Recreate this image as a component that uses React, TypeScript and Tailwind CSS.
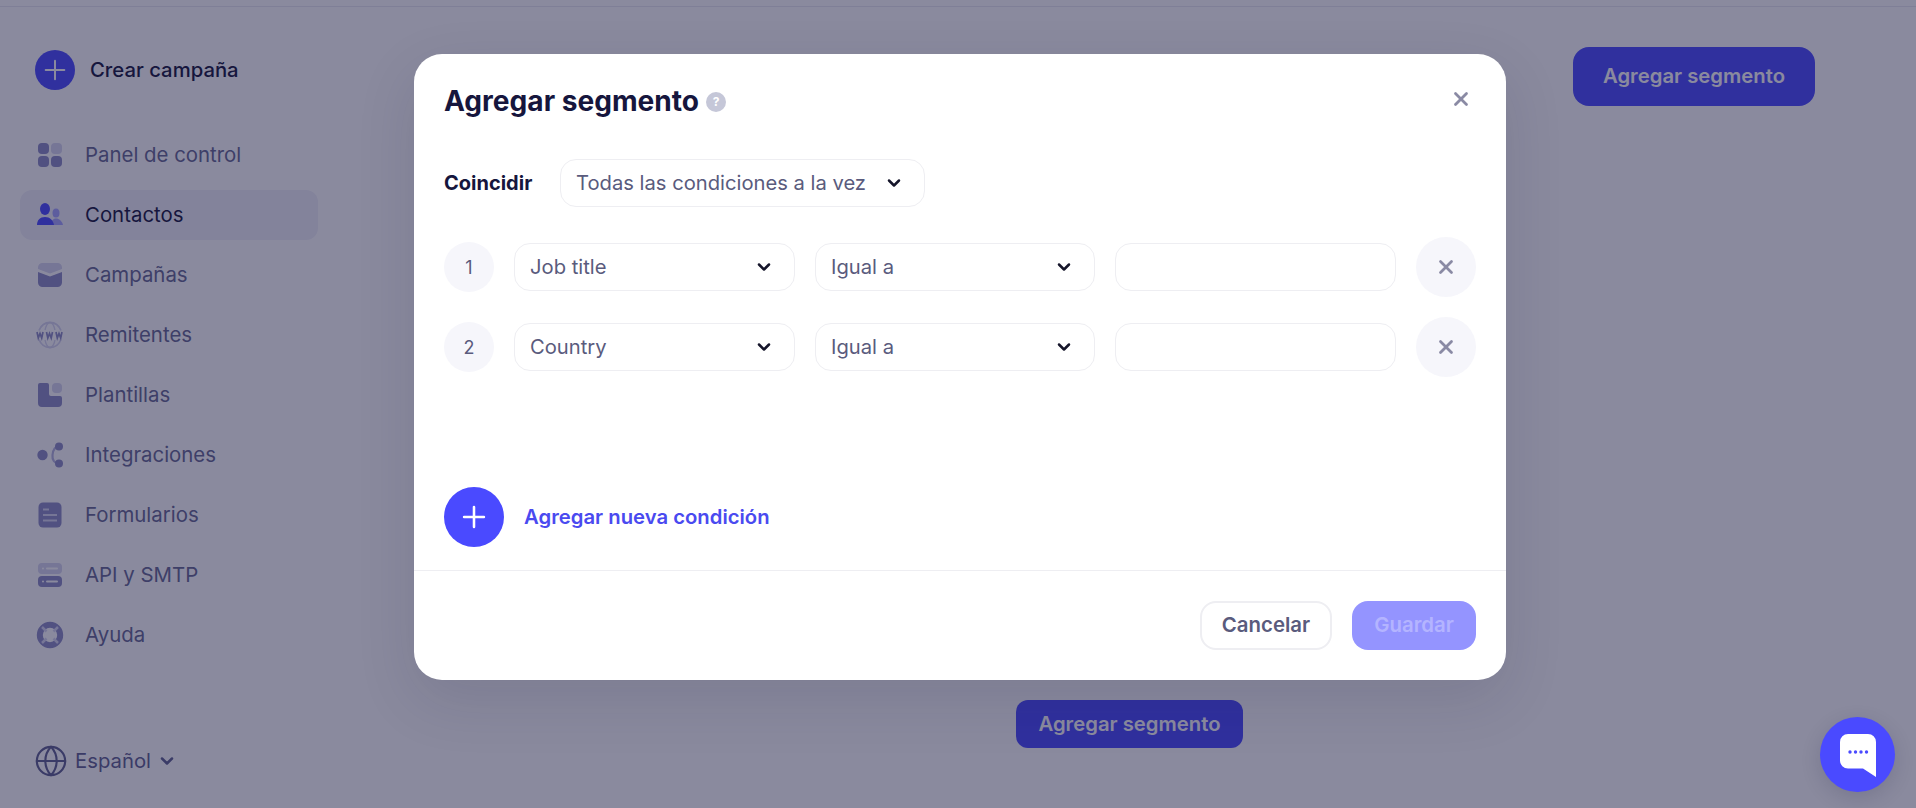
import { ChevronDown, Globe, Plus, X } from 'lucide-react';
import type { ReactNode } from 'react';

const DARK = '#8c8cc4';
const LIGHT = '#d6d6ee';

function PanelIcon() {
  return (
    <svg width="28" height="28" viewBox="0 0 28 28">
      <rect x="2" y="2" width="11" height="11" rx="4" fill={DARK} />
      <rect x="15" y="2" width="11" height="11" rx="4" fill={LIGHT} />
      <rect x="2" y="15" width="11" height="11" rx="4" fill={DARK} />
      <rect x="15" y="15" width="11" height="11" rx="4" fill={DARK} />
    </svg>
  );
}

function ContactsIcon() {
  return (
    <svg width="28" height="28" viewBox="0 0 28 28">
      <ellipse cx="20" cy="12" rx="3.500" ry="4.500" fill="#a4a4ff" />
      <path d="M15 24c0-4 2-6.500 5-6.500s6 2.500 7 6.500z" fill="#a4a4ff" />
      <ellipse cx="9" cy="8" rx="5" ry="6" fill="#4a4aff" />
      <path d="M1 24c0-5 3-8 8-8s8 3 9 8z" fill="#4a4aff" />
    </svg>
  );
}

function CampaignIcon() {
  return (
    <svg width="28" height="28" viewBox="0 0 28 28">
      <path d="M2 6.500A4.500 4.500 0 0 1 6.500 2h15A4.500 4.500 0 0 1 26 6.500v1.500l-12 4.500L2 8z" fill={LIGHT} />
      <path d="M2 11l12 4.500L26 11v10.500a4.500 4.500 0 0 1-4.500 4.500h-15A4.500 4.500 0 0 1 2 21.500z" fill={DARK} />
    </svg>
  );
}

function WwwIcon() {
  return (
    <svg width="28" height="28" viewBox="0 0 28 28" fill="none">
      <path d="M3 9.500C5 4.500 9 1.500 14 1.500s9 3 11 8M3 18.500c2 5 6 8 11 8s9-3 11-8" stroke={LIGHT} strokeWidth="1.800" />
      <path d="M9 9C10 4.500 12 1.500 14 1.500S18 4.500 19 9M9 19c1 4.500 3 7.500 5 7.500s4-3 5-7.500" stroke={LIGHT} strokeWidth="1.300" />
      <path d="M1 11l1.300 6 1.700-4.500L5.700 17 7 11M10.500 11l1.300 6 1.700-4.500 1.700 4.500 1.300-6M20 11l1.300 6 1.700-4.500 1.700 4.500 1.300-6" stroke={DARK} strokeWidth="1.700" />
    </svg>
  );
}

function TemplateIcon() {
  return (
    <svg width="28" height="28" viewBox="0 0 28 28">
      <path d="M2 4a2 2 0 0 1 2-2h7a2 2 0 0 1 2 2v9a2 2 0 0 0 2 2h9a2 2 0 0 1 2 2v5a4 4 0 0 1-4 4H6a4 4 0 0 1-4-4z" fill={DARK} />
      <rect x="16" y="2" width="10" height="10" rx="4" fill={LIGHT} />
    </svg>
  );
}

function IntegrationIcon() {
  return (
    <svg width="28" height="28" viewBox="0 0 28 28" fill="none">
      <path d="M23 5.500c-4.500 0-6 3.500-6.500 8.500s2 8.500 6.500 8.500" stroke="#b4b4de" strokeWidth="2.200" />
      <circle cx="6.500" cy="14" r="5.200" fill={DARK} />
      <circle cx="23" cy="5.500" r="4" fill={DARK} />
      <circle cx="23" cy="22.500" r="4" fill={DARK} />
    </svg>
  );
}

function FormIcon() {
  return (
    <svg width="28" height="28" viewBox="0 0 28 28">
      <rect x="2.500" y="1.500" width="23" height="25" rx="4.500" fill={DARK} />
      <rect x="7" y="7.500" width="6" height="2" fill={LIGHT} />
      <rect x="7" y="13" width="14" height="2" fill={LIGHT} />
      <rect x="7" y="18.500" width="14" height="2" fill={LIGHT} />
    </svg>
  );
}

function ApiIcon() {
  return (
    <svg width="28" height="28" viewBox="0 0 28 28">
      <rect x="2" y="2" width="24" height="11" rx="4" fill={LIGHT} />
      <rect x="2" y="15" width="24" height="11" rx="4" fill={DARK} />
      <circle cx="7" cy="7.500" r="1" fill="#fff" />
      <rect x="10" y="6.500" width="12" height="2" rx="1" fill="#fff" />
      <circle cx="7" cy="20.500" r="1" fill="#fff" />
      <rect x="10" y="19.500" width="12" height="2" rx="1" fill="#fff" />
    </svg>
  );
}

function HelpIcon() {
  return (
    <svg width="28" height="28" viewBox="0 0 28 28" fill="none">
      <circle cx="14" cy="14" r="10.200" stroke={DARK} strokeWidth="6" />
      <path d="M6 6l4.500 4.500M22 6l-4.500 4.500M6 22l4.500-4.500M22 22l-4.500-4.500" stroke={LIGHT} strokeWidth="2.500" />
    </svg>
  );
}

const navItems: { label: string; icon: ReactNode; active?: boolean }[] = [
  { label: 'Panel de control', icon: <PanelIcon /> },
  { label: 'Contactos', icon: <ContactsIcon />, active: true },
  { label: 'Campañas', icon: <CampaignIcon /> },
  { label: 'Remitentes', icon: <WwwIcon /> },
  { label: 'Plantillas', icon: <TemplateIcon /> },
  { label: 'Integraciones', icon: <IntegrationIcon /> },
  { label: 'Formularios', icon: <FormIcon /> },
  { label: 'API y SMTP', icon: <ApiIcon /> },
  { label: 'Ayuda', icon: <HelpIcon /> },
];

function Sidebar() {
  return (
    <aside className="w-[340px] shrink-0 flex flex-col pt-[43px] pb-[30px]">
      {/* Create campaign */}
      <div className="flex items-center gap-[15px] pl-[35px]">
        <div className="w-10 h-10 rounded-full bg-[#4a4aff] flex items-center justify-center text-white">
          <Plus size={32} strokeWidth={1.5} />
        </div>
        <span className="text-[20.300px] font-medium text-[#16163d]">Crear campaña</span>
      </div>

      <nav className="mt-10 ml-5 w-[298px] flex flex-col gap-[10px]">
        {navItems.map((item) => (
          <div
            key={item.label}
            className={`h-[50px] rounded-xl pl-4 flex items-center gap-[21px] text-[20.400px] ${
              item.active ? 'bg-[#f1f1f9] text-[#16163d]' : 'text-[#666892]'
            }`}
          >
            <span className="w-7 h-7 shrink-0">{item.icon}</span>
            {item.label}
          </div>
        ))}
      </nav>

      {/* Language */}
      <div className="mt-auto pl-[34px] flex items-center gap-[7px] text-[20.300px] text-[#5f6090]">
        <Globe size={34} strokeWidth={1.5} />
        <span>Español</span>
        <ChevronDown size={20} strokeWidth={3} className="-ml-[1px]" />
      </div>
    </aside>
  );
}

function Select({ value, width }: { value: string; width: string }) {
  return (
    <div
      className={`${width} h-12 shrink-0 rounded-2xl border border-[#eeeef2] bg-white pl-[15px] pr-5 flex items-center justify-between text-[20.200px] text-[#5a5b7d]`}
    >
      <span>{value}</span>
      <ChevronDown size={20} strokeWidth={3} className="text-[#15152a]" />
    </div>
  );
}

function ConditionRow({ index, field }: { index: number; field: string }) {
  return (
    <div className="flex items-center gap-5 h-[60px]">
      <div className="w-[50px] h-[50px] shrink-0 rounded-full bg-[#f6f6fb] flex items-center justify-center text-[18px] text-[#5a5b7d]">
        {index}
      </div>
      <Select value={field} width="w-[281px]" />
      <Select value="Igual a" width="w-[280px]" />
      <div className="w-[281px] h-12 shrink-0 rounded-2xl border border-[#eeeef2] bg-white" />
      <button className="w-[60px] h-[60px] shrink-0 rounded-full bg-[#f6f6fb] flex items-center justify-center text-[#8a8aa4]">
        <X size={22} strokeWidth={3} />
      </button>
    </div>
  );
}

function SegmentModal() {
  return (
    <div className="absolute inset-0 z-10 bg-[#15153d]/50 flex justify-center pt-[54px] pl-[4px]">
      <div className="w-[1092px] h-[626px] rounded-[28px] bg-white shadow-[0_20px_60px_rgba(21,21,61,0.12)] flex flex-col">
        <div className="flex-1 px-[30px]">
          {/* Header */}
          <div className="pt-[19px] flex items-center justify-between h-[76px]">
            <div className="flex items-center gap-[7px]">
              <h2 className="text-[28.100px] font-bold text-[#16163d]">Agregar segmento</h2>
              <span className="w-5 h-5 mt-[2px] rounded-full bg-[#c5c7d8] flex items-center justify-center text-[12px] font-bold text-white">
                ?
              </span>
            </div>
            <X size={22} strokeWidth={3} className="text-[#8a8aa4] mr-1 -mt-[6px]" />
          </div>

          <div className="mt-[29px] flex items-center gap-[27px]">
            <span className="w-[89px] whitespace-nowrap text-[20px] font-bold text-[#16163d]">Coincidir</span>
            <Select value="Todas las condiciones a la vez" width="w-[365px]" />
          </div>

          <div className="mt-[30px] flex flex-col gap-5">
            <ConditionRow index={1} field="Job title" />
            <ConditionRow index={2} field="Country" />
          </div>

          <div className="mt-[110px] flex items-center gap-5">
            <div className="w-[60px] h-[60px] rounded-full bg-[#4a4aff] flex items-center justify-center text-white">
              <Plus size={34} strokeWidth={1.8} />
            </div>
            <span className="text-[20.300px] font-semibold text-[#4a4af0]">Agregar nueva condición</span>
          </div>
        </div>

        {/* Footer */}
        <div className="h-[110px] border-t border-[#eeeef2] px-[30px] pt-[30px] flex justify-end gap-5">
          <button className="w-[132px] h-[49px] rounded-2xl border-2 border-[#eeeef2] text-[20.400px] font-semibold text-[#5a5b7d]">
            Cancelar
          </button>
          <button className="w-[124px] h-[49px] rounded-2xl bg-[#9494ff] text-[20.400px] font-semibold text-[#b4b4ff]">
            Guardar
          </button>
        </div>
      </div>
    </div>
  );
}

function ChatLauncher() {
  return (
    <div className="absolute z-20 right-[21px] bottom-4 w-[75px] h-[75px] rounded-full bg-[#4a4aff] shadow-[0_6px_20px_rgba(21,21,61,0.15)] flex items-center justify-center">
      <svg width="36" height="43" viewBox="0 0 36 43" className="mt-[2px]">
        <path d="M8 0h20a8 8 0 0 1 8 8v35l-13-8.500H8a8 8 0 0 1-8-8V8a8 8 0 0 1 8-8z" fill="#fff" />
        <circle cx="10" cy="18" r="1.700" fill="#4a4aff" />
        <circle cx="15.500" cy="18" r="1.700" fill="#4a4aff" />
        <circle cx="21" cy="18" r="1.700" fill="#4a4aff" />
        <circle cx="26.500" cy="18" r="1.700" fill="#4a4aff" />
      </svg>
    </div>
  );
}

export default function App() {
  return (
    <div className="relative h-screen overflow-hidden bg-white font-['Inter',sans-serif]">
      <div className="h-[7px] border-b border-[#e8e8f0]" />
      <div className="flex h-[801px]">
        <Sidebar />
        {/* Page behind the dialog */}
        <main className="flex-1 flex flex-col pt-10 pr-[101px]">
          <div className="flex justify-end">
            <button className="w-[242px] h-[59px] rounded-2xl bg-[#4a4aff] text-[20.300px] font-semibold text-white">
              Agregar segmento
            </button>
          </div>
          <div className="mt-[594px] ml-[676px]">
            <button className="w-[227px] h-12 rounded-xl bg-[#4a4aff] text-[20.300px] font-semibold text-white">
              Agregar segmento
            </button>
          </div>
        </main>
      </div>
      <SegmentModal />
      <ChatLauncher />
    </div>
  );
}
